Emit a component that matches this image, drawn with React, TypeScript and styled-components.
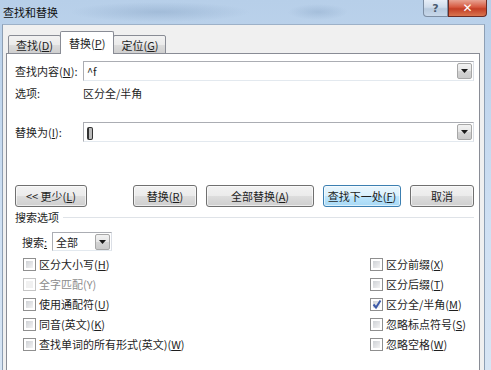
import styled, { createGlobalStyle } from "styled-components";

const GlobalStyle = createGlobalStyle`
  html, body {
    margin: 0;
    padding: 0;
  }
  body {
    width: 491px;
    height: 370px;
    overflow: hidden;
    background: #c6daf0;
    font-family: "Noto Sans CJK SC", "Microsoft YaHei", sans-serif;
    font-size: 11px;
    color: #1e1e1e;
  }
`;

const Window = styled.div`
  width: 491px;
  height: 370px;
  display: flex;
  flex-direction: column;
  background:
    radial-gradient(ellipse 90px 10px at 160px 12px, rgba(120, 150, 185, 0.35), transparent),
    radial-gradient(ellipse 30px 8px at 318px 12px, rgba(120, 150, 185, 0.3), transparent),
    linear-gradient(180deg, #b7cfe9 0%, #cfe0f3 60%, #d7e5f4 100%);
`;

const TitleBar = styled.div`
  height: 24px;
  display: flex;
  align-items: flex-start;
  padding-left: 3px;
  padding-right: 4px;
`;

const Title = styled.div`
  line-height: 24px;
  font-size: 11px;
  color: #111;
  flex: 1;
`;

const CaptionButton = styled.div<{ $close?: boolean }>`
  width: ${(p) => (p.$close ? 39 : 25)}px;
  height: 17px;
  display: flex;
  align-items: center;
  justify-content: center;
  box-sizing: border-box;
  border: 1px solid ${(p) => (p.$close ? "#6b2b25" : "#7d8ea3")};
  border-top: none;
  border-radius: ${(p) => (p.$close ? "0 0 4px 0" : "0 0 0 4px")};
  background: ${(p) =>
    p.$close
      ? "linear-gradient(180deg, #e8a393 0%, #d6583f 45%, #c33f26 55%, #d9754f 100%)"
      : "linear-gradient(180deg, #e7eef7 0%, #cfdceb 45%, #b8cade 55%, #c8d8ea 100%)"};
  color: ${(p) => (p.$close ? "#fff" : "#4b5b70")};
  font-family: "DejaVu Sans", sans-serif;
  font-size: ${(p) => (p.$close ? 12 : 11)}px;
  font-weight: bold;
`;

const Frame = styled.div`
  flex: 1;
  display: flex;
  padding: 0 6px 0 2px;
  min-height: 0;
`;

const Client = styled.div`
  flex: 1;
  display: flex;
  flex-direction: column;
  background: #f0f0f0;
  border-left: 1px solid #8d9fb4;
  border-right: 1px solid #8d9fb4;
  border-top: 1px solid #9db1c8;
  padding: 7px 4px 0 3px;
  min-height: 0;
`;

const TabRow = styled.div`
  display: flex;
  align-items: flex-end;
  padding-left: 2px;
  height: 22px;
  position: relative;
  z-index: 1;
  margin-bottom: -1px;
`;

const Tab = styled.div<{ $active?: boolean }>`
  box-sizing: border-box;
  height: ${(p) => (p.$active ? 23 : 19)}px;
  padding: ${(p) => (p.$active ? "4px 8px 0" : "2px 7px 0")};
  margin: ${(p) => (p.$active ? "0 -1px" : "0")};
  border: 1px solid #898c95;
  border-bottom: ${(p) => (p.$active ? "none" : "1px solid #898c95")};
  border-radius: 2px 2px 0 0;
  background: ${(p) =>
    p.$active ? "#fff" : "linear-gradient(180deg, #f2f2f2 0%, #ebebeb 50%, #dddddd 51%, #cfcfcf 100%)"};
  position: relative;
  z-index: ${(p) => (p.$active ? 2 : 1)};
  line-height: 15px;
  white-space: nowrap;
  & + & {
    border-left: ${(p) => (p.$active ? "1px solid #898c95" : "none")};
  }
`;

const Panel = styled.div`
  flex: 1;
  background: #fff;
  border: 1px solid #898c95;
  border-bottom: none;
  padding: 7px 5px 0 8px;
  display: flex;
  flex-direction: column;
`;

const FieldRow = styled.div<{ $mt?: number }>`
  display: flex;
  align-items: center;
  margin-top: ${(p) => p.$mt ?? 0}px;
`;

const Label = styled.div`
  width: 68px;
  flex-shrink: 0;
  line-height: 16px;
  white-space: nowrap;
`;

const Combo = styled.div`
  flex: 1;
  height: 20px;
  box-sizing: border-box;
  border: 1px solid #abadb3;
  border-right-color: #dbdfe6;
  border-bottom-color: #e3e9ef;
  display: flex;
  align-items: center;
  padding: 0 1px 0 3px;
  background: #fff;
`;

const ComboText = styled.div`
  flex: 1;
  line-height: 16px;
  white-space: nowrap;
`;

const DropButton = styled.div`
  width: 15px;
  height: 16px;
  box-sizing: border-box;
  border: 1px solid #a7a7a7;
  border-radius: 2px;
  background: linear-gradient(180deg, #f2f2f2 0%, #e6e6e6 50%, #d4d4d4 51%, #cacaca 100%);
  display: flex;
  align-items: center;
  justify-content: center;
`;

const Caret = styled.span`
  display: inline-block;
  width: 3px;
  height: 11px;
  border: 1px solid #333;
  border-left-width: 2px;
  border-radius: 2px;
  background: #bbb;
  vertical-align: middle;
`;

const ButtonRow = styled.div`
  display: flex;
  align-items: center;
  margin-top: 43px;
  gap: 9px;
`;

const Spacer = styled.div`
  flex: 1;
`;

const Button = styled.div<{ $w: number; $focus?: boolean }>`
  width: ${(p) => p.$w}px;
  height: 22px;
  box-sizing: border-box;
  border: 1px solid ${(p) => (p.$focus ? "#3c7fb1" : "#707070")};
  border-radius: 3px;
  background: ${(p) =>
    p.$focus
      ? "linear-gradient(180deg, #eaf6fd 0%, #d9f0fc 50%, #bee6fd 51%, #a7d9f5 100%)"
      : "linear-gradient(180deg, #f2f2f2 0%, #ebebeb 50%, #dddddd 51%, #cfcfcf 100%)"};
  box-shadow: inset 0 0 0 1px rgba(255, 255, 255, 0.6);
  display: flex;
  align-items: center;
  justify-content: center;
  line-height: 16px;
  white-space: nowrap;
`;

const GroupHeader = styled.div`
  display: flex;
  align-items: center;
  gap: 4px;
  margin-top: 2px;
  line-height: 16px;
  &::after {
    content: "";
    flex: 1;
    height: 1px;
    background: #dfe3e8;
  }
`;

const SearchRow = styled.div`
  display: flex;
  align-items: center;
  margin-top: 7px;
  padding-left: 7px;
  gap: 5px;
`;

const Select = styled.div`
  width: 60px;
  height: 19px;
  box-sizing: border-box;
  border: 1px solid #abadb3;
  border-right-color: #dbdfe6;
  border-bottom-color: #e3e9ef;
  display: flex;
  align-items: center;
  padding: 0 1px 0 3px;
`;

const Options = styled.div`
  display: grid;
  grid-template-columns: 1fr 104px;
  grid-auto-rows: 20px;
  margin-top: 3px;
  padding-left: 8px;
`;

const Check = styled.div<{ $disabled?: boolean }>`
  display: flex;
  align-items: center;
  gap: 3px;
  color: ${(p) => (p.$disabled ? "#8d8d8d" : "inherit")};
  line-height: 16px;
  white-space: nowrap;
`;

const Box = styled.span<{ $disabled?: boolean }>`
  width: 13px;
  height: 13px;
  box-sizing: border-box;
  border: 1px solid ${(p) => (p.$disabled ? "#c5c5c5" : "#8f8f8f")};
  background: #fff;
  padding: 2px;
  display: flex;
  align-items: center;
  justify-content: center;
  flex-shrink: 0;
  &::before {
    content: "";
    width: 100%;
    height: 100%;
    background: ${(p) =>
      p.$disabled ? "#f1f1f1" : "linear-gradient(135deg, #cfd2d6 0%, #e4e5e7 60%, #f4f4f4 100%)"};
  }
`;

const CheckedBox = styled(Box)`
  position: relative;
  svg {
    position: absolute;
    left: 1px;
    top: 0px;
  }
`;

const Arrow = () => (
  <svg width="7" height="4" viewBox="0 0 7 4">
    <path d="M0 0 H7 L3.5 4 Z" fill="#1a1a1a" />
  </svg>
);

const CheckBox = ({ label, disabled, checked }: { label: React.ReactNode; disabled?: boolean; checked?: boolean }) => (
  <Check $disabled={disabled}>
    {checked ? (
      <CheckedBox>
        <svg width="10" height="11" viewBox="0 0 10 11">
          <path d="M1.5 5.5 L4 8.5 L8.5 1.5" fill="none" stroke="#3d5aa8" strokeWidth="2" />
        </svg>
      </CheckedBox>
    ) : (
      <Box $disabled={disabled} />
    )}
    <span>{label}</span>
  </Check>
);

export default function App() {
  return (
    <>
      <GlobalStyle />
      <Window>
        <TitleBar>
          <Title>查找和替换</Title>
          <CaptionButton>?</CaptionButton>
          <CaptionButton $close>✕</CaptionButton>
        </TitleBar>
        <Frame>
          <Client>
            <TabRow>
              <Tab>查找(<u>D</u>)</Tab>
              <Tab $active>替换(<u>P</u>)</Tab>
              <Tab>定位(<u>G</u>)</Tab>
            </TabRow>
            <Panel>
              <FieldRow>
                <Label>查找内容(<u>N</u>):</Label>
                <Combo>
                  <ComboText>^f</ComboText>
                  <DropButton>
                    <Arrow />
                  </DropButton>
                </Combo>
              </FieldRow>
              <FieldRow $mt={4}>
                <Label>选项:</Label>
                <div>区分全/半角</div>
              </FieldRow>
              <FieldRow $mt={21}>
                <Label>替换为(<u>I</u>):</Label>
                <Combo>
                  <ComboText>
                    <Caret />
                  </ComboText>
                  <DropButton>
                    <Arrow />
                  </DropButton>
                </Combo>
              </FieldRow>
              <ButtonRow>
                <Button $w={72}>&lt;&lt; 更少(<u>L</u>)</Button>
                <Spacer />
                <Button $w={64}>替换(<u>R</u>)</Button>
                <Button $w={108}>全部替换(<u>A</u>)</Button>
                <Button $w={78} $focus>
                  查找下一处(<u>F</u>)
                </Button>
                <Button $w={64}>取消</Button>
              </ButtonRow>
              <GroupHeader>搜索选项</GroupHeader>
              <SearchRow>
                <span>
                  搜索<u>:</u>
                </span>
                <Select>
                  <ComboText>全部</ComboText>
                  <DropButton>
                    <Arrow />
                  </DropButton>
                </Select>
              </SearchRow>
              <Options>
                <CheckBox label={<>区分大小写(<u>H</u>)</>} />
                <CheckBox label={<>区分前缀(<u>X</u>)</>} />
                <CheckBox disabled label={<>全字匹配(Y)</>} />
                <CheckBox label={<>区分后缀(<u>T</u>)</>} />
                <CheckBox label={<>使用通配符(<u>U</u>)</>} />
                <CheckBox checked label={<>区分全/半角(<u>M</u>)</>} />
                <CheckBox label={<>同音(英文)(<u>K</u>)</>} />
                <CheckBox label={<>忽略标点符号(<u>S</u>)</>} />
                <CheckBox label={<>查找单词的所有形式(英文)(<u>W</u>)</>} />
                <CheckBox label={<>忽略空格(<u>W</u>)</>} />
              </Options>
            </Panel>
          </Client>
        </Frame>
      </Window>
    </>
  );
}
